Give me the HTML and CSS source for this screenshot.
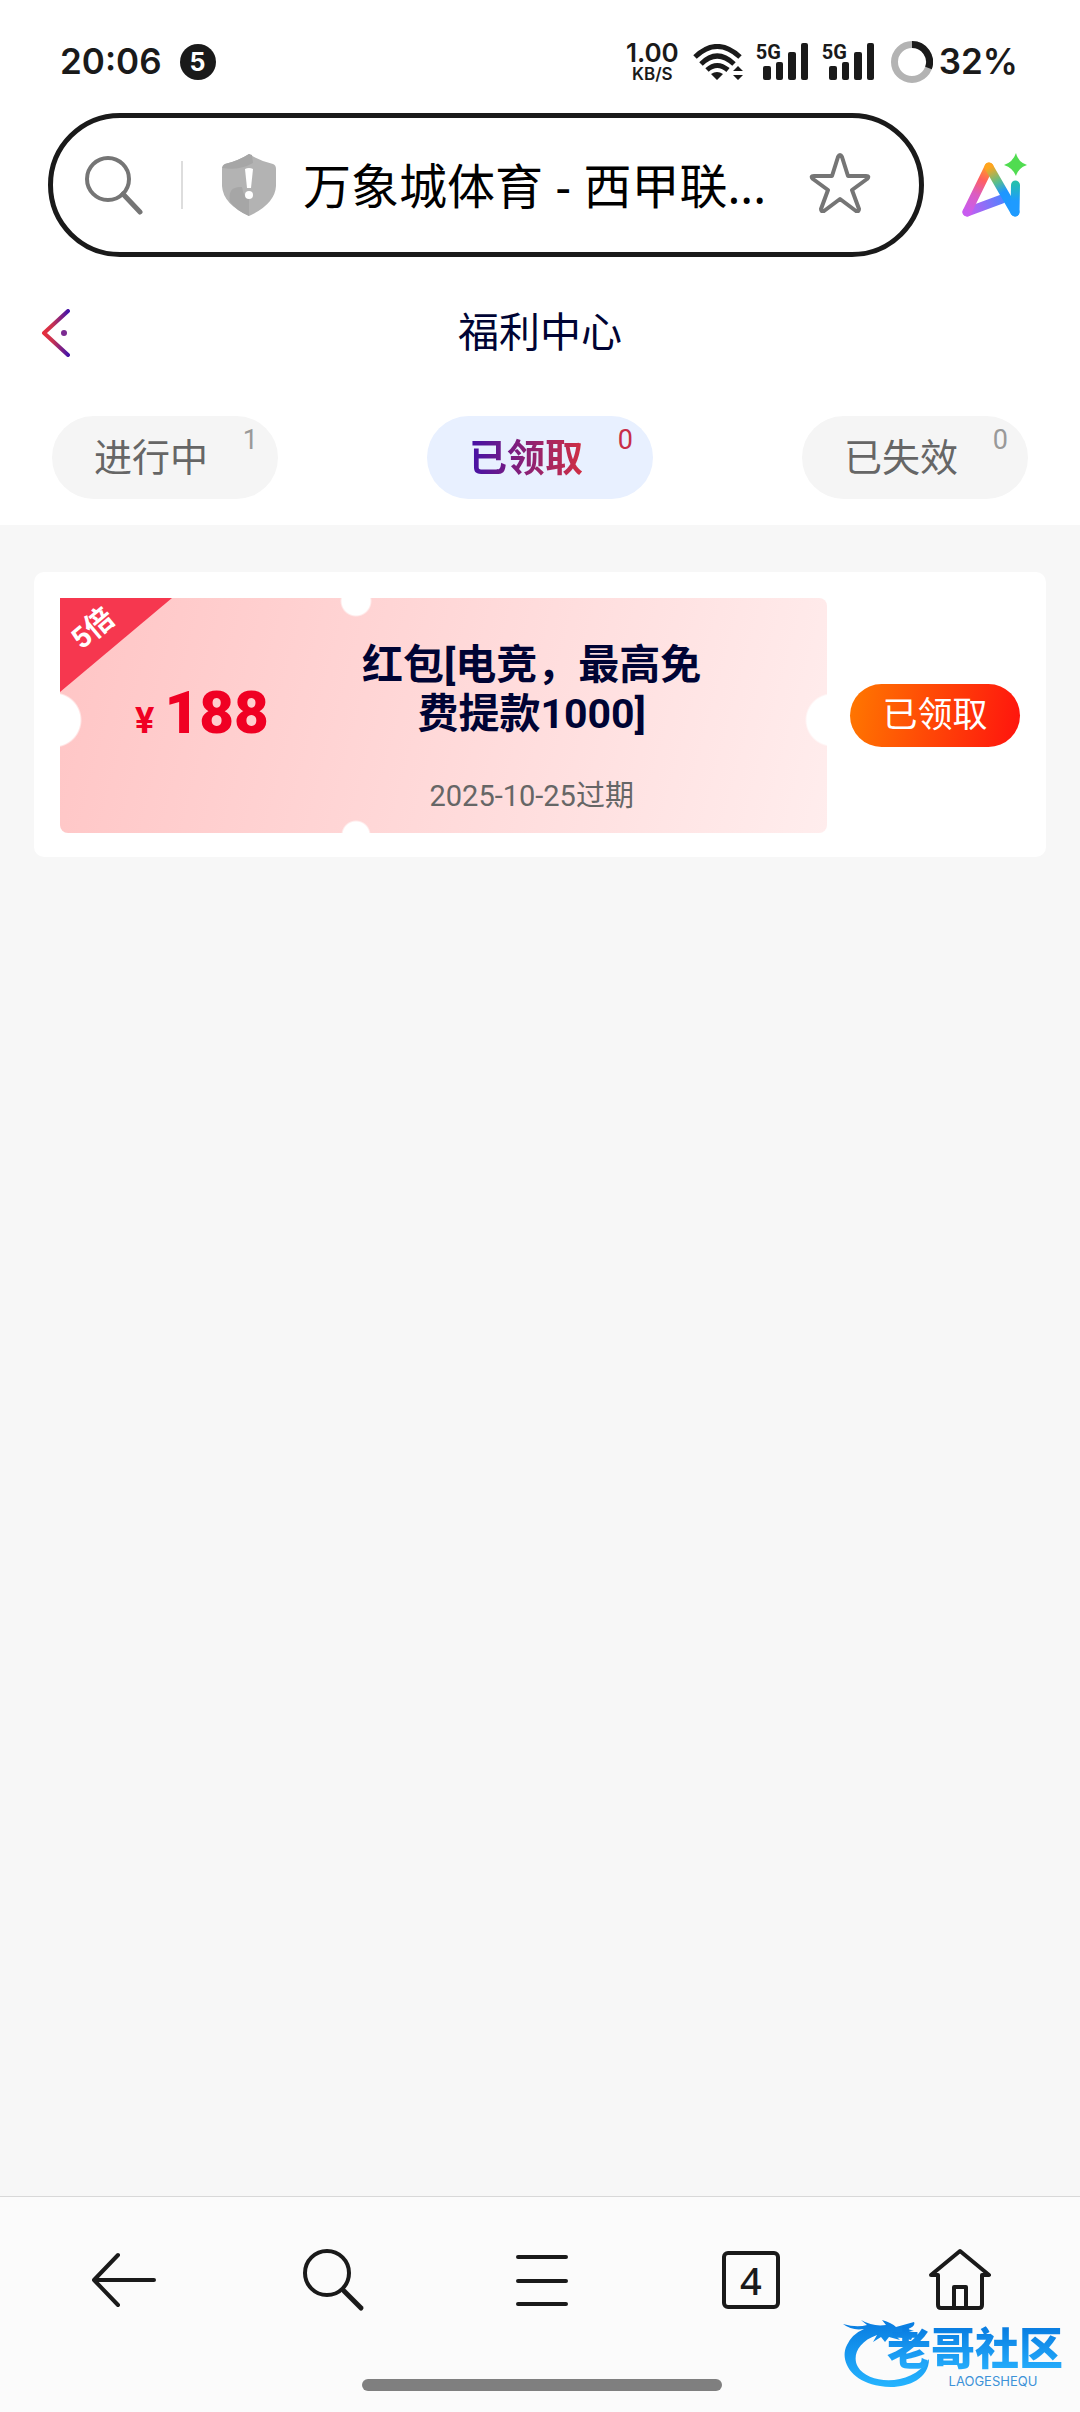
FILE: index.html
```html
<!DOCTYPE html>
<html lang="zh-CN">
<head>
<meta charset="utf-8">
<meta name="viewport" content="width=device-width, initial-scale=1">
<title>福利中心</title>
<link rel="stylesheet" href="styles.css">
</head>
<body>
<div class="status">
  <time class="clock">20:06</time>
  <span class="notice">5</span>
  <div class="speed"><b>1.00</b><small>KB/S</small></div>
  <svg class="wifi" width="50" height="36" viewBox="0 0 50 36" fill="none" stroke="#1a1a1a" stroke-width="5">
    <path d="M2 13Q24-8 47 13M8 20Q24 4 41 20M14 26Q24 17 35 26"/>
    <path d="M18 30Q24 26 30 30L24 36ZM40 27L45 22 50 27ZM40 31L45 36 50 31Z" fill="#1a1a1a" stroke="none"/>
  </svg>
  <div class="signal"><span>5G</span>
    <svg width="46" height="38" viewBox="0 0 46 38" fill="#1a1a1a"><rect y="24" width="8" height="14" rx="2"/><rect x="13" y="20" width="7" height="18" rx="2"/><rect x="25" y="10" width="8" height="28" rx="2"/><rect x="38" y="1" width="7" height="37" rx="2"/></svg>
  </div>
  <div class="signal"><span>5G</span>
    <svg width="46" height="38" viewBox="0 0 46 38" fill="#1a1a1a"><rect y="24" width="8" height="14" rx="2"/><rect x="13" y="20" width="7" height="18" rx="2"/><rect x="25" y="10" width="8" height="28" rx="2"/><rect x="38" y="1" width="7" height="37" rx="2"/></svg>
  </div>
  <svg class="ring" width="42" height="42" viewBox="0 0 42 42" fill="none" stroke-width="7"><circle cx="21" cy="21" r="17.500" stroke="#b3b3b3"/><path d="M21 3.500A17.500 17.500 0 0 1 37.500 27" stroke="#1a1a1a"/></svg>
  <span class="battery">32%</span>
</div>

<div class="browser">
  <form class="address">
    <svg width="58" height="60" viewBox="0 0 58 60" fill="none" stroke="#757575" stroke-linecap="round"><circle cx="23" cy="24" r="21" stroke-width="4"/><path d="M38 39L55 57" stroke-width="5"/></svg>
    <span class="divider"></span>
    <svg class="shield" width="54" height="62" viewBox="0 0 54 62"><path d="M27 0Q38 7 51 10Q54 11 54 15V32Q53 50 27 62Q1 50 0 32V15Q0 11 3 10Q16 7 27 0Z" fill="#b3b3b3"/><path d="M27 0Q16 7 3 10Q1 11 0 14Q17 17 31 9L30 1ZM8 48Q5 32 20 33Q22 45 27 44V62Q15 57 8 48Z" fill="#a6a6a6"/><path d="M23 15Q27 13 31 15L29 34H25Z" fill="#fff"/><circle cx="27" cy="41" r="4" fill="#fff"/></svg>
    <input class="url" type="text" aria-label="网址" value="万象城体育 - 西甲联...">
    <button class="icon star" type="button" aria-label="收藏"><svg width="62" height="60" viewBox="0 0 62 60" fill="none" stroke="#757575" stroke-width="4" stroke-linejoin="round"><path d="M31 2Q32 2 33 4L39 23H57Q61 23 58 26L43 37 50 56Q50 59 47 58L31 46 15 58Q12 59 12 56L19 37 4 26Q1 23 5 23H23L29 4Q30 2 31 2Z"/></svg></button>
  </form>
  <button class="icon" type="button" aria-label="AI"><svg width="66" height="64" viewBox="0 0 66 64" fill="none">
    <defs>
      <linearGradient id="left" x1="6" y1="60" x2="29" y2="14" gradientUnits="userSpaceOnUse"><stop stop-color="#c85cf0"/><stop offset=".4" stop-color="#dc5cc0"/><stop offset=".7" stop-color="#ff6060"/><stop offset="1" stop-color="#ffa51e"/></linearGradient>
      <linearGradient id="right" x1="28" y1="14" x2="50" y2="56" gradientUnits="userSpaceOnUse"><stop stop-color="#ffa51e"/><stop offset=".35" stop-color="#59bf8a"/><stop offset=".6" stop-color="#1e96ff"/><stop offset="1" stop-color="#1e9bff"/></linearGradient>
      <linearGradient id="base" x1="5" y1="60" x2="42" y2="46" gradientUnits="userSpaceOnUse"><stop stop-color="#c85cf0"/><stop offset="1" stop-color="#5083ff"/></linearGradient>
      <linearGradient id="stem" x1="54" y1="30" x2="54" y2="60" gradientUnits="userSpaceOnUse"><stop stop-color="#24bfae"/><stop offset=".6" stop-color="#1e9bff"/></linearGradient>
    </defs>
    <g stroke-width="9" stroke-linecap="round" stroke-linejoin="round"><path d="M5 59L40 46" stroke="url(#base)"/><path d="M5 59L27 14" stroke="url(#left)"/><path d="M27 14L53 59" stroke="url(#right)"/><path d="M53.500 32L53 59" stroke="url(#stem)"/></g>
    <path d="M54 0Q56 9 65 12Q56 15 54 23Q51 15 42 12Q51 9 54 0Z" fill="#50dc50"/></svg></button>
</div>

<header class="title-bar">
  <a class="back" href="#" aria-label="返回"><svg width="30" height="48" viewBox="0 0 30 48" fill="none"><defs><linearGradient id="chevron" x1="0" x2="1" y1="0" y2="0"><stop stop-color="#e62e3c"/><stop offset=".35" stop-color="#c93250"/><stop offset="1" stop-color="#4814a8"/></linearGradient></defs><path d="M27 2L3 24 27 46" stroke="url(#chevron)" stroke-width="4" stroke-linecap="round" stroke-linejoin="round"/><circle cx="23" cy="24" r="3" fill="#7b2a91"/></svg></a>
  <h1>福利中心</h1>
</header>

<nav class="tabs">
  <button class="tab" type="button"><span>进行中</span><sup>1</sup></button>
  <button class="tab active" type="button"><span>已领取</span><sup>0</sup></button>
  <button class="tab" type="button"><span>已失效</span><sup>0</sup></button>
</nav>

<main class="content">
  <article class="card">
    <div class="coupon">
      <span class="ribbon"></span><span class="multiple">5倍</span>
      <p class="amount"><span>¥</span><strong>188</strong></p>
      <div class="details"><h2>红包[电竞，最高免费提款1000]</h2><p>2025-10-25过期</p></div>
    </div>
    <button class="claimed" type="button">已领取</button>
  </article>
</main>

<footer class="toolbar">
  <nav class="actions">
    <button class="icon" type="button" aria-label="后退"><svg width="64" height="64" viewBox="0 0 64 64"><path d="M26 7L2 32 26 57M2 32H62"/></svg></button>
    <button class="icon" type="button" aria-label="搜索"><svg width="64" height="64" viewBox="0 0 64 64"><circle cx="26" cy="25" r="22"/><path d="M43 43L60 60" stroke-width="5"/></svg></button>
    <button class="icon" type="button" aria-label="菜单"><svg width="64" height="64" viewBox="0 0 64 64"><path d="M8 9H56M8 33H56M8 56H56"/></svg></button>
    <button class="pages" type="button" aria-label="4 个标签页">4</button>
    <button class="icon" type="button" aria-label="主页"><svg width="64" height="64" viewBox="0 0 64 64"><path d="M10 27H3L32 3 61 27H54V57Q54 60 51 60H13Q10 60 10 57ZM26 60V39H38V60"/></svg></button>
  </nav>
  <div class="gesture"></div>
  <div class="brand">
    <svg width="90" height="70" viewBox="0 0 90 70"><defs><linearGradient id="dragon" x1="0" x2="0" y1="0" y2="1"><stop stop-color="#087be0"/><stop offset="1" stop-color="#25b4ff"/></linearGradient></defs><path d="M0 6Q14 10 24 7L18 2Q30 9 43 7L39 2Q49 5 53 9L71 4Q73 8 65 11L71 13Q60 14 70 18L68 22Q60 20 53 18L57 22 46 19 42 24 38 19 30 24 34 17C14 24 9 39 15 49C25 66 68 70 86 41C86 64 58 72 37 68C8 64-4 42 4 27Q9 16 21 11Q9 13 0 6Z" fill="url(#dragon)"/></svg>
    <div class="brand-text"><strong>老哥社区</strong><span>LAOGESHEQU</span></div>
  </div>
</footer>
</body>
</html>
```
FILE: styles.css
```css
* { box-sizing: border-box; }

body {
  margin: 0;
  min-height: 100vh;
  display: flex;
  flex-direction: column;
  background: #fff;
  color: #1a1a1a;
  font-family: Roboto, "Noto Sans CJK SC", sans-serif;
}

h1, h2, p { margin: 0; }
svg { display: block; flex: none; }
button { border: 0; padding: 0; font-family: inherit; color: inherit; background: none; }
.icon { flex: none; }

/* Device status row */
.status {
  height: 113px;
  padding: 11px 62px 0 60px;
  display: flex;
  align-items: flex-start;
  font-family: Inter, sans-serif;
}
.clock, .battery { font-size: 35px; line-height: 40px; font-weight: 600; padding-top: 30px; }
.notice {
  width: 36px;
  height: 36px;
  margin: 33px auto 0 18px;
  border-radius: 50%;
  background: #1a1a1a;
  color: #fff;
  font-size: 25px;
  line-height: 36px;
  font-weight: 700;
  text-align: center;
}
.speed { margin-top: 29px; text-align: center; }
.speed b, .speed small { display: block; }
.speed b { font-size: 26px; line-height: 26px; font-weight: 600; }
.speed small { font-size: 17px; line-height: 17px; font-weight: 600; }
.wifi { margin: 33px 0 0 14px; }
.signal { position: relative; margin: 31px 0 0 20px; }
.signal span {
  position: absolute;
  left: -7px;
  top: 0;
  font-family: Roboto, sans-serif;
  font-size: 20px;
  line-height: 20px;
  font-weight: 700;
}
.ring { margin: 30px 6px 0 16px; }

/* Browser address row */
.browser { display: flex; align-items: center; gap: 38px; padding: 0 52px 0 48px; }
.address {
  flex: 1;
  min-width: 0;
  height: 144px;
  padding: 0 48px 0 32px;
  display: flex;
  align-items: center;
  border: 5px solid #1a1a1a;
  border-radius: 72px;
}
.divider { width: 2px; height: 48px; margin: 0 39px 0 38px; background: #ddd; }
.url {
  flex: 1;
  min-width: 0;
  height: 72px;
  margin: 0 20px 0 27px;
  padding: 0 0 4px;
  border: 0;
  outline: 0;
  background: none;
  color: #000;
  font-family: "Noto Sans", "Noto Sans CJK SC", sans-serif;
  font-size: 48px;
}
.star { padding-bottom: 4px; }

/* Page heading and tabs */
.title-bar {
  height: 159px;
  padding: 0 41px;
  display: grid;
  grid-template-columns: 1fr auto 1fr;
  align-items: center;
  color: #000434;
}
.title-bar h1 { font-size: 41px; line-height: 60px; font-weight: 400; padding-bottom: 8px; }
.back { padding-bottom: 8px; }
.tabs { display: flex; justify-content: space-between; padding: 0 52px 26px; }
.tab {
  position: relative;
  width: 226px;
  height: 83px;
  padding: 0 28px 0 0;
  border-radius: 42px;
  background: #f5f5f5;
  color: #666;
  font-size: 38px;
  line-height: 80px;
}
.tab sup {
  position: absolute;
  right: 20px;
  top: 8px;
  color: #999;
  font-size: 27px;
  line-height: 32px;
}
.tab.active { background: #e8f0ff; }
.tab.active span {
  display: inline-block;
  font-weight: 700;
  background: linear-gradient(90deg, #4311a8, #d12f43);
  -webkit-background-clip: text;
  background-clip: text;
  color: transparent;
}
.tab.active sup { color: #c72d48; }

/* Coupon list */
.content { flex: 1; padding: 47px 34px; background: #f7f7f7; }
.card {
  display: flex;
  align-items: center;
  gap: 23px;
  padding: 26px 26px 24px 26px;
  border-radius: 10px;
  background: #fff;
}
.coupon {
  position: relative;
  flex: 1;
  min-height: 235px;
  display: grid;
  grid-template-columns: 37fr 49fr 14fr;
  overflow: hidden;
  border-radius: 0 8px 8px 8px;
  background:
    radial-gradient(circle at -6px 122px, #fff 26px, transparent 28px),
    radial-gradient(circle at calc(100% + 5px) 122px, #fff 25px, transparent 27px),
    radial-gradient(circle at 296px 3px, #fff 14px, transparent 16px),
    radial-gradient(circle at 296px 237px, #fff 13px, transparent 15px),
    linear-gradient(105deg, #ffc5c5, #ffeded);
}
.ribbon {
  position: absolute;
  left: 0;
  top: 0;
  width: 112px;
  height: 94px;
  background: #f6374f;
  clip-path: polygon(0 0, 100% 0, 0 100%);
}
.multiple {
  position: absolute;
  left: 10px;
  top: 12px;
  color: #fff;
  font-size: 29px;
  line-height: 36px;
  font-weight: 700;
  transform: rotate(-40deg);
}
.amount {
  padding-top: 80px;
  display: flex;
  justify-content: center;
  align-items: baseline;
  gap: 10px;
  color: #f00023;
  font-weight: 700;
}
.amount span { font-size: 36px; }
.amount strong { font-size: 60px; line-height: 70px; }
.details { padding-top: 43px; text-align: center; }
.details h2 { color: #000434; font-size: 41px; line-height: 49px; font-weight: 700; }
.details p { margin-top: 37px; color: #666; font-size: 29px; line-height: 40px; }
.claimed {
  width: 170px;
  height: 63px;
  border-radius: 32px;
  background: linear-gradient(100deg, #ff7800, #ff130e);
  color: #fff;
  font-size: 35px;
  line-height: 60px;
}

/* Browser toolbar */
.toolbar { position: relative; padding: 51px 16px 21px 20px; border-top: 1px solid #d8d8d8; background: #fbfbfb; }
.actions { display: grid; grid-template-columns: repeat(5, 1fr); justify-items: center; align-items: center; }
.actions svg { fill: none; stroke: #1a1a1a; stroke-width: 4; stroke-linecap: round; stroke-linejoin: round; }
.pages {
  width: 58px;
  height: 58px;
  border: 4px solid #1a1a1a;
  border-radius: 6px;
  font-family: "Noto Sans", sans-serif;
  font-size: 38px;
  line-height: 50px;
  font-weight: 500;
}
.gesture { width: 360px; max-width: 50%; height: 12px; margin: 67px auto 0; border-radius: 6px; background: #7f7f7f; }

/* Community mark floating over the toolbar */
.brand { position: absolute; right: 17px; bottom: 24px; display: flex; align-items: flex-end; pointer-events: none; }
.brand svg { margin-right: -46px; }
.brand-text { display: flex; flex-direction: column; align-items: center; }
.brand-text strong {
  font-size: 44px;
  line-height: 48px;
  font-weight: 900;
  background: linear-gradient(#087be0, #28b2ff);
  -webkit-background-clip: text;
  background-clip: text;
  color: transparent;
}
.brand-text span { padding-left: 36px; color: #3d92d8; font-family: Inter, sans-serif; font-size: 13px; line-height: 14px; }
```
